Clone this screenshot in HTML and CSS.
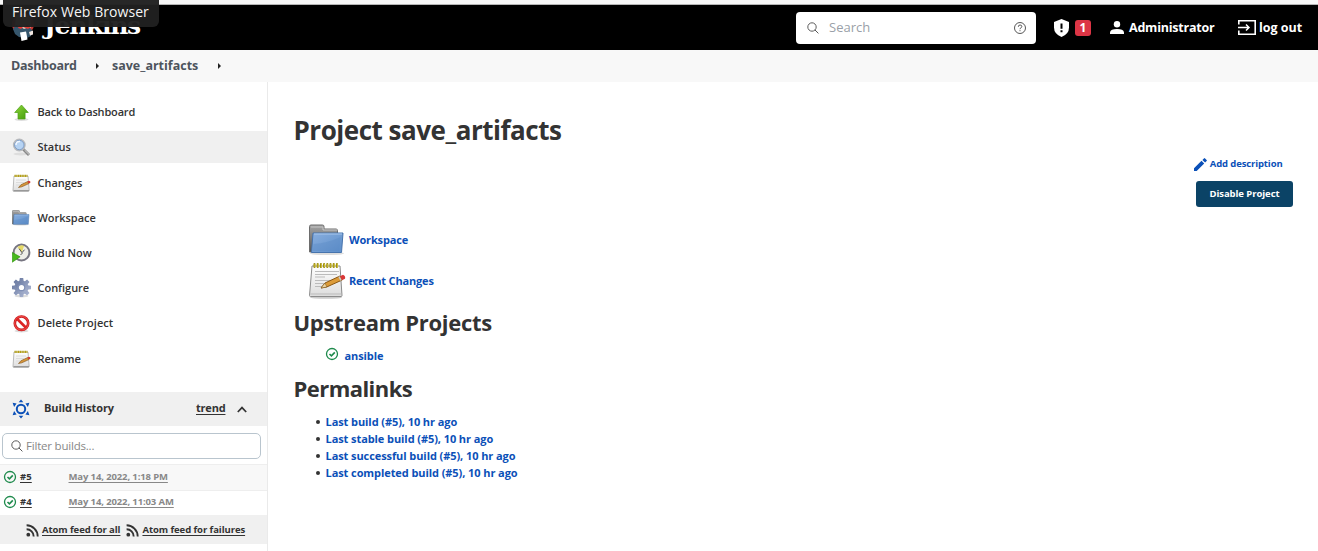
FILE: index.html
```html
<!DOCTYPE html>
<html lang="en">
<head>
<meta charset="utf-8">
<title>save_artifacts [Jenkins]</title>
<link rel="stylesheet" href="styles.css">
</head>
<body>
<svg class="defs" width="0" height="0" aria-hidden="true">
  <defs>
    <linearGradient id="blue" x1="0" y1="0" x2="1" y2="1"><stop offset="0" stop-color="#89afdf"/><stop offset="1" stop-color="#5c8dc8"/></linearGradient>
    <linearGradient id="grey" x1="0" y1="0" x2="0" y2="1"><stop offset="0" stop-color="#a5a5a5"/><stop offset="1" stop-color="#555"/></linearGradient>
    <linearGradient id="green" x1="0" y1="0" x2="1" y2="1"><stop offset="0" stop-color="#8fd73c"/><stop offset="1" stop-color="#3f9a08"/></linearGradient>
    <linearGradient id="paper" x1="0" y1="0" x2="0" y2="1"><stop offset="0" stop-color="#fff"/><stop offset="1" stop-color="#dcdcdc"/></linearGradient>
    <linearGradient id="gear" x1="0" y1="0" x2="1" y2="1"><stop offset="0" stop-color="#5f7099"/><stop offset="1" stop-color="#b5bfda"/></linearGradient>
    <symbol id="folder" viewBox="0 0 36 32">
      <ellipse cx="18" cy="29.5" rx="17" ry="1.6" fill="#ddd"/>
      <path d="M.5 28V2.500Q.5 1 2 1h11.500q1.500 0 1.500 1.500V5h12q1.500 0 1.500 1.500V28z" fill="url(#grey)" stroke="#6d6d6d"/>
      <path d="M2 3h12v3h14" fill="none" stroke="#c4c4c4"/>
      <path d="M4 9h30L32.500 28.500H2.500z" fill="url(#blue)" stroke="#4774ad"/>
      <path d="M5 10h28" stroke="#a9c7ec"/><path d="M4.500 20q14-1 27-7l-1 14H3.800z" fill="#5687c4" opacity=".35"/>
    </symbol>
    <symbol id="notepad" viewBox="0 0 37 37">
      <ellipse cx="17" cy="35.500" rx="16" ry="1.300" fill="#ccc"/>
      <path d="M3 4h28l2 29.500q0 1-1 1H1.500q-1 0-1-1z" fill="url(#paper)" stroke="#8b8b8b"/>
      <path d="M1.500 32h31" stroke="#bbb"/>
      <path d="M6 9.500h24M6 12.500h22M6 15h10M6 18.500h22M6 21.500h15M6 24.500h12" stroke="#bbb"/>
      <path d="M5.500 2v3M8.700 2v3M11.900 2v3M15.100 2v3M18.300 2v3M21.500 2v3M24.700 2v3M27.900 2v3" stroke="#9d8d08" stroke-width="2.100" stroke-linecap="round"/>
      <path d="M6 2v3M9.200 2v3M12.400 2v3M15.600 2v3M18.800 2v3M22 2v3M25.200 2v3M28.400 2v3" stroke="#eadb52" stroke-width=".7"/>
      <path d="M12 26l4-5 15-7 2.200 4-15.500 7z" fill="#dc9b38" stroke="#895612"/>
      <path d="M12 26l4-5 1.800 4z" fill="#eed7a4" stroke="#755018" stroke-width=".5"/>
      <path d="M31 14.200l3-1.500q2.800 1 2 4l-3 1.500z" fill="#d93838"/>
      <path d="M30 14.500l2 4" stroke="#ccc" stroke-width="1.500"/>
    </symbol>
    <symbol id="notepad-small" viewBox="0 0 19 19">
      <path d="M2 2h14l1.200 14.500Q17 17.500 16 17.500H2q-1 0-1-1z" fill="url(#paper)" stroke="#aaa" stroke-width=".8"/>
      <path d="M1.500 16.500h15.500" stroke="#999"/>
      <path d="M2.500 1.800h13" stroke="#b5a014" stroke-width="2.200" stroke-dasharray="1.300 .45"/>
      <path d="M4 6h10M4 8.500h8M4 11h5" stroke="#dcdcdc"/>
      <path d="M6.500 13.500l2.500-2.800 6.700-3.200 1.200 2.100-7 3.200z" fill="#d59539" stroke="#805019" stroke-width=".6"/>
      <path d="M15.500 7.500l1.500-.8q2 .6 1.300 2.100l-1.500.8z" fill="#d3342d"/>
    </symbol>
    <symbol id="check" viewBox="0 0 14 14">
      <circle cx="7" cy="7" r="5.500" fill="none" stroke="#1e8a4c" stroke-width="1.300"/>
      <path d="M4.500 7l1.900 1.900 3.400-3.500" fill="none" stroke="#1e8a4c" stroke-width="1.600"/>
    </symbol>
    <symbol id="search" viewBox="0 0 12 12">
      <circle cx="5" cy="5" r="4.200" fill="none" stroke="#555" stroke-width=".95"/><path d="M7.900 7.900l3.500 3.500" stroke="#555"/>
    </symbol>
    <symbol id="feed" viewBox="0 0 13 13">
      <circle cx="2.300" cy="10.700" r="1.900" fill="#333"/><path d="M.6 5.300a7.100 7.100 0 0 1 7.100 7.100M.6 1.300a11.100 11.100 0 0 1 11.100 11.100" fill="none" stroke="#333" stroke-width="1.900"/>
    </symbol>
  </defs>
</svg>

<div class="tooltip"><span class="t-tip">Firefox Web Browser</span></div>
<div class="window-edge"></div>

<header class="header">
  <a class="brand">
    <svg class="brand-face" width="24" height="30" viewBox="0 0 24 30">
      <circle cx="12" cy="11" r="11" fill="#c93630"/>
      <path d="M5 3Q12-2 19 4l1 10-4 5H8L4 13z" fill="#e8d5c4"/>
      <path d="M2 16l3-4 5 2 3 2 5-2 3 3-1 6-4 2-8-1-4-3z" fill="#36566c"/>
      <path d="M12 14l4-2 4 2-3 2zM12 14l-4-2-1 3 3 1z" fill="#e33b35"/>
      <path d="M9 19.500l6-1 1.500 8-6 1.500z" fill="#fff"/>
      <path d="M18 19l4-1.500v4l-3 1z" fill="#efe5df"/>
    </svg>
    <span class="brand-name">Jenkins</span>
  </a>
  <div class="searchbox">
    <svg width="12" height="12"><use href="#search"/></svg>
    <span class="t-search">Search</span>
    <svg class="help" width="12" height="12" viewBox="0 0 12 12"><circle cx="6" cy="6" r="5.500" fill="none" stroke="#444" stroke-width=".9"/><path d="M4.300 4.800q0-1.800 1.800-1.800 1.700 0 1.700 1.500 0 1-1 1.400-.8.300-.8 1.300M6 8.200v1" fill="none" stroke="#444" stroke-width=".9"/></svg>
  </div>
  <div class="alerts">
    <svg width="15" height="18" viewBox="0 0 15 18"><path d="M7.500 0L15 3v5.500q0 6.500-7.500 9.500Q0 15 0 8.500V3z" fill="#fff"/><path d="M7.500 4.500v5.200M7.500 11.300v2" stroke="#000" stroke-width="2"/></svg>
    <span class="badge">1</span>
  </div>
  <a class="user"><svg width="14" height="13" viewBox="0 0 14 13"><circle cx="7" cy="3.200" r="3.200" fill="#fff"/><path d="M0 13v-1.700Q.6 8 7 8t7 3.300V13z" fill="#fff"/></svg><span class="t-user">Administrator</span></a>
  <a class="logout"><svg width="18" height="15" viewBox="0 0 18 15"><path d="M.8 4.500V.8h16.400v13.400H.8v-3.700" fill="none" stroke="#fff" stroke-width="1.600"/><path d="M0 7.500h10.500M8 4.500l3 3-3 3" fill="none" stroke="#fff" stroke-width="1.500"/></svg><span class="t-logout">log out</span></a>
</header>

<nav class="breadcrumbs">
  <a class="t-crumb1">Dashboard</a><i class="arrow"></i><a class="t-crumb2">save_artifacts</a><i class="arrow"></i>
</nav>

<div class="page">
  <aside class="side">
    <ul class="tasks">
      <li><svg width="19" height="19" viewBox="0 0 19 19"><ellipse cx="9.500" cy="16.500" rx="7" ry="1.500" fill="#ddd"/><path d="M9.500 2L16.300 9.500h-3.200V16H6V9.500H2.700z" fill="url(#green)" stroke="#4da116" stroke-width=".7"/></svg><span class="t-back">Back to Dashboard</span></li>
      <li class="active"><svg width="19" height="19" viewBox="0 0 19 19"><ellipse cx="9" cy="16" rx="7.500" ry="1.500" fill="#ddd"/><path d="M11 11l6 6" stroke="#888" stroke-width="2.800"/><path d="M12.500 12l4.500 4.400" stroke="#d5d5d5"/><circle cx="7.300" cy="7" r="5.600" fill="#b6d3f3" stroke="#b8babd" stroke-width="1.700"/><circle cx="7.300" cy="7" r="4.700" fill="none" stroke="#7196c7" stroke-width=".8"/><path d="M4 7q0-4 4-3.500" stroke="#f1f7ff" fill="none" stroke-width="1.500"/></svg><span class="t-status">Status</span></li>
      <li class="low"><svg width="19" height="19"><use href="#notepad-small"/></svg><span class="t-changes">Changes</span></li>
      <li><svg width="18" height="16"><use href="#folder"/></svg><span class="t-work">Workspace</span></li>
      <li><svg width="20" height="20" viewBox="0 0 20 20"><circle cx="9.500" cy="9.500" r="7.900" fill="#eeeee9" stroke="#777581" stroke-width="2"/><path d="M9.800 9.500L5.500 4q4-3 6.500-1z" fill="#e6da67"/><path d="M7.200 5.700l2.800 4 2.500-3M10.500 10l-2 2" stroke="#555" fill="none"/><path d="M.3 9.500l7.800 4.300-7.800 5.400z" fill="#48b91c" stroke="#299007" stroke-width=".6"/></svg><span class="t-now">Build Now</span></li>
      <li><svg width="20" height="20" viewBox="0 0 20 20"><ellipse cx="9.500" cy="18" rx="7" ry="1.500" fill="#ddd"/><g fill="url(#gear)" transform="translate(-.5 0)"><circle cx="10" cy="9.500" r="7"/><path d="M8.300 0h3.400l.6 4H7.700zM8.300 19h3.400l.6-4H7.700zM.5 7.800v3.400l4 .6V7.200zM19.500 7.800v3.400l-4 .6V7.200zM2 4l2.400-2.400L7.500 4 4.500 7zM18 4l-2.400-2.400L12.500 4l3 3zM2 15l2.400 2.400L7.500 15l-3-3zM18 15l-2.400 2.400-3.100-2.400 3-3z"/></g><circle cx="9.500" cy="9.500" r="3.700" fill="#7f8fb5"/><circle cx="9.500" cy="9.500" r="2.600" fill="#fff"/></svg><span class="t-conf">Configure</span></li>
      <li><svg width="19" height="19" viewBox="0 0 19 19"><ellipse cx="9.500" cy="17" rx="7" ry="1.500" fill="#ddd"/><circle cx="9.500" cy="9.200" r="6.700" fill="#fff" stroke="#c71b1b" stroke-width="2.700"/><circle cx="9.500" cy="9.200" r="6.800" fill="none" stroke="#ed4545" stroke-width="1.200"/><path d="M5 4.700l9 9" stroke="#dc2424" stroke-width="2.700"/></svg><span class="t-del">Delete Project</span></li>
      <li class="low"><svg width="19" height="19"><use href="#notepad-small"/></svg><span class="t-ren">Rename</span></li>
    </ul>

    <section class="history">
      <div class="history-head">
        <svg width="18" height="20" viewBox="0 0 18 20"><circle cx="9" cy="10" r="4.200" fill="none" stroke="#0b50b8" stroke-width="2"/><path d="M9 .5l2.300 2.800H6.700zM9 19.500l2.300-2.800H6.700zM.6 3.700l4 .9-2.500 3.400zM17.400 3.700l-4 .9 2.500 3.400zM.6 16.300l4-.9L2.100 12zM17.400 16.300l-4-.9 2.500-3.400z" fill="#0b50b8"/></svg>
        <span class="t-hist">Build History</span>
        <a class="t-trend">trend</a>
        <svg width="10" height="7" viewBox="0 0 10 7"><path d="M.8 6L5 1.600 9.200 6" fill="none" stroke="#333" stroke-width="1.700"/></svg>
      </div>
      <div class="filter"><svg width="12" height="12"><use href="#search"/></svg><span class="t-filter">Filter builds...</span></div>
      <div class="build odd"><svg width="14" height="14"><use href="#check"/></svg><a class="num">#5</a><a class="date t-d5">May 14, 2022, 1:18 PM</a></div>
      <div class="build"><svg width="14" height="14"><use href="#check"/></svg><a class="num">#4</a><a class="date t-d4">May 14, 2022, 11:03 AM</a></div>
      <div class="feeds">
        <svg width="13" height="13"><use href="#feed"/></svg><a class="t-f1">Atom feed for all</a>
        <svg width="13" height="13"><use href="#feed"/></svg><a class="t-f2">Atom feed for failures</a>
      </div>
    </section>
  </aside>

  <main class="main">
    <h1><span class="t-h1">Project save_artifacts</span></h1>
    <div class="describe"><svg width="13" height="13" viewBox="0 0 13 13"><path d="M0 10.300L7.500 2.800l2.700 2.700L2.700 13H0zM8.400 1.900L9.900.4q.6-.6 1.200 0l1.500 1.500q.6.600 0 1.200l-1.500 1.500z" fill="#0b50b8"/></svg><a class="t-desc">Add description</a></div>
    <div class="actions"><button><span class="t-dis">Disable Project</span></button></div>
    <div class="links">
      <div><svg width="36" height="32"><use href="#folder"/></svg><a class="t-lw">Workspace</a></div>
      <div><svg width="37" height="37"><use href="#notepad"/></svg><a class="t-lr">Recent Changes</a></div>
    </div>
    <h2><span class="t-up">Upstream Projects</span></h2>
    <div class="upstream"><svg width="14" height="14"><use href="#check"/></svg><a class="t-ans">ansible</a></div>
    <h2><span class="t-perm">Permalinks</span></h2>
    <ul class="permalinks">
      <li><a>Last build (#5), 10 hr ago</a></li>
      <li><a>Last stable build (#5), 10 hr ago</a></li>
      <li><a>Last successful build (#5), 10 hr ago</a></li>
      <li><a>Last completed build (#5), 10 hr ago</a></li>
    </ul>
  </main>
</div>
</body>
</html>
```

FILE: styles.css
```css
* { box-sizing: border-box; }
body { margin: 0; width: 1318px; height: 551px; overflow: hidden; background: #fff; color: #333; font: 11px/16px "Open Sans", "Noto Sans", sans-serif; white-space: nowrap; }
svg { flex: none; display: block; }
.defs { position: absolute; }
ul { list-style: none; margin: 0; padding: 0; }

.tooltip { position: absolute; z-index: 2; left: 3px; top: 0; width: 156px; height: 27px; padding: 1px 0 0 9px; background: rgba(32, 32, 32, .97); border-radius: 0 0 6px 6px; color: #f5f5f5; font-size: 14px; line-height: 22px; letter-spacing: .06px; }
.window-edge { height: 5px; background: #f8f8f8; border-bottom: 1px solid #b5b5b5; }

.header { height: 45px; background: #000; color: #fff; display: flex; align-items: center; font-size: 12.500px; font-weight: 700; }
.brand { display: flex; align-items: center; width: 796px; padding-left: 11px; gap: 9px; }
.brand-name { font: bold 25px/30px "DejaVu Serif", serif; letter-spacing: -1.300px; margin-top: -3px; }
.searchbox { width: 240px; height: 32px; border-radius: 4px; background: #fff; color: #9a9fa8; display: flex; align-items: center; padding: 0 10px 0 11px; font-weight: 400; font-size: 13px; }
.t-search { margin: -2px 0 0 10px; }
.help { margin-left: auto; }
.alerts { display: flex; align-items: center; gap: 6px; margin-left: 18px; }
.badge { width: 16px; height: 16px; border-radius: 3px; background: #dc3545; text-align: center; font-size: 12px; line-height: 16px; }
.user { display: flex; align-items: center; gap: 5px; margin-left: 19px; width: 128px; }
.t-user { letter-spacing: -.22px; }
.logout { display: flex; align-items: center; gap: 3px; }

.breadcrumbs { height: 32px; background: #f8f8f8; display: flex; align-items: center; padding: 0 0 1px 11px; font-size: 12.500px; font-weight: 700; color: #4d545d; }
.breadcrumbs a { display: block; }
.t-crumb1 { width: 85px; letter-spacing: -.25px; }
.t-crumb2 { width: 106px; }
.arrow { border: 3px solid transparent; border-left-color: #222; border-right: 0; margin-right: 13px; }

.page { display: flex; height: 469px; }
.side { width: 268px; border-right: 1px solid #eaeaea; }
.tasks { padding-top: 14px; height: 310px; display: flex; flex-direction: column; gap: 3.200px; font-weight: 600; letter-spacing: -.03px; }
.tasks li { height: 32px; display: flex; align-items: center; padding-left: 12px; color: #333; }
.tasks li svg { margin-right: auto; }
.tasks li span { width: 229.500px; }
.tasks .low { padding-top: 2px; }
.t-back { letter-spacing: -.17px; }
.t-del { letter-spacing: .07px; }
.active { background: #f0f0f0; }

.history-head { height: 34px; background: #f0f0f0; display: flex; align-items: center; padding-left: 12px; font-weight: 700; font-size: 11px; }
.t-hist { margin: -2px 0 0 14px; width: 152px; letter-spacing: -.1px; }
.t-trend { margin-top: -2px; width: 30px; margin-right: 11px; letter-spacing: -.2px; }
.t-trend, .num, .date, .feeds a { text-decoration: underline; text-underline-offset: 2px; text-decoration-skip-ink: none; }
.filter { margin: 7px 0 5px 2px; width: 259px; height: 26px; border: 1px solid #b9c5ce; border-radius: 5px; display: flex; align-items: center; padding-left: 8px; gap: 3px; font-size: 11.500px; letter-spacing: -.2px; color: #888; }
.build { height: 24px; display: flex; align-items: center; padding: 0 0 3px 3px; font-size: 9.500px; font-weight: 700; letter-spacing: -.12px; }
.odd { height: 27px; padding-bottom: 2px; background: #f8f8f8; border: solid #eee; border-width: 1px 0; }
.num { margin-left: 3px; width: 48.500px; letter-spacing: .1px; }
.date { color: #888; }
.feeds { height: 29px; background: #f0f0f0; display: flex; align-items: center; padding: 1px 0 0 26px; font-size: 9.500px; font-weight: 700; letter-spacing: -.07px; }
.feeds svg { margin-right: 3px; }
.t-f1 { margin-right: 6px; }

.main { flex: 1; padding: 32px 25px 0 25.500px; }
h1 { margin: 0; font-size: 26px; line-height: 32px; letter-spacing: -.48px; }
.describe { display: flex; justify-content: flex-end; align-items: center; gap: 3px; height: 18px; margin-top: 9px; padding-right: 10.500px; color: #0b50b8; font-size: 9.500px; font-weight: 700; letter-spacing: -.13px; }
.actions { display: flex; justify-content: flex-end; margin-top: 8px; }
button { width: 97px; height: 26px; border: 0; border-radius: 3px; background: #0b4366; color: #fff; font: 700 9.500px/26px "Open Sans", sans-serif; letter-spacing: -.07px; padding: 0; }
.links { padding: 12px 0 0 15px; color: #0b50b8; font-weight: 700; letter-spacing: -.17px; }
.links div { display: flex; align-items: center; height: 41px; }
.links a { margin-left: 4.500px; }
.links div + div a { margin-left: 3.500px; }
h2 { margin: 7px 0 0; font-size: 22px; line-height: 28px; letter-spacing: -.31px; }
.t-perm { letter-spacing: -.55px; }
.upstream { display: flex; align-items: center; height: 18px; margin: 11px 0 9px 31px; color: #0b50b8; font-weight: 700; letter-spacing: -.1px; }
.upstream svg { margin-top: -4px; }
.upstream a { margin-left: 6px; }
.permalinks { margin: 11px 0 0 22px; color: #0b50b8; font-weight: 700; line-height: 17px; letter-spacing: -.08px; }
.permalinks li { display: flex; align-items: center; }
.permalinks li::before { content: ""; width: 4px; height: 4px; border-radius: 50%; background: #333; margin-right: 6px; }
```
